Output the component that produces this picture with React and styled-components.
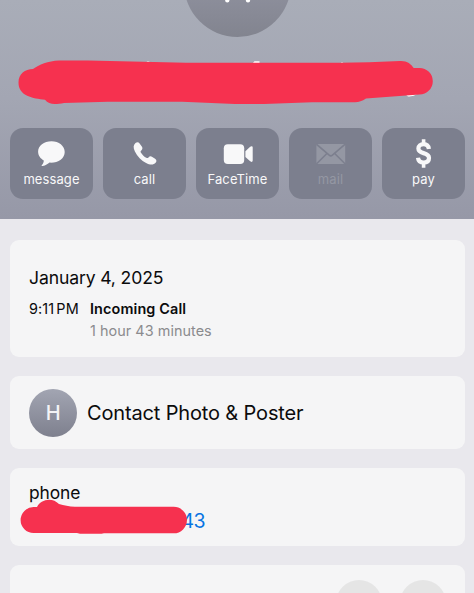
import React from "react";
import styled, { createGlobalStyle } from "styled-components";

const GlobalStyle = createGlobalStyle`
  * { box-sizing: border-box; }
  html, body { margin: 0; overflow: hidden; background: #e9e8ed; }
  body { font-family: Inter, "Liberation Sans", sans-serif; color: #0b0b0c; }
`;

const Screen = styled.main`
  width: 474px;
  height: 593px;
  overflow: hidden;
  display: flex;
  flex-direction: column;
  background: #e9e8ed;
`;

const Header = styled.header`
  position: relative;
  flex: none;
  height: 219px;
  padding: 128px 9px 0 10px;
  background: linear-gradient(#a9adb8 0%, #a3a6b3 45%, #9698a7 100%);
`;

const HeaderArt = styled.svg`
  position: absolute;
  inset: 0;
  display: block;
`;

const Actions = styled.nav`
  display: grid;
  grid-template-columns: repeat(5, 83px);
  gap: 10px;
`;

const Action = styled.button`
  height: 70.5px;
  padding: 11px 0 0;
  border: 0;
  border-radius: 13px;
  background: #7c7f8e;
  color: ${(p) => (p.disabled ? "#9497a3" : "#f8f8f9")};
  display: flex;
  flex-direction: column;
  align-items: center;
  font: 400 13px/16px Inter, "Liberation Sans", sans-serif;
  letter-spacing: 0.1px;

  svg { display: block; margin-bottom: 2px; }
`;

const Cards = styled.div`
  display: flex;
  flex-direction: column;
  gap: 19.4px;
  padding: 21px 9px 0 10px;
`;

const Card = styled.section`
  flex: none;
  height: ${(p) => p.$height}px;
  border-radius: 9px;
  background: #f5f5f6;
`;

const CallCard = styled(Card)`
  padding: 27px 19px 0;
`;

const DateTitle = styled.div`
  font-size: 17.6px;
  line-height: 22px;
  letter-spacing: -0.14px;
`;

const CallRow = styled.div`
  display: grid;
  grid-template-columns: 61px 1fr;
  margin-top: 10px;
  font-size: 14.4px;
  line-height: 20px;
`;

const Time = styled.span`
  letter-spacing: 0.15px;
  word-spacing: -2.2px;
`;

const CallKind = styled.div`
  font-weight: 600;
  letter-spacing: 0.13px;
`;

const Duration = styled.div`
  margin-top: 2px;
  color: #8b8b8e;
  letter-spacing: 0.05px;
`;

const PosterCard = styled(Card)`
  display: flex;
  align-items: center;
  gap: 10px;
  padding-left: 19px;
  font-size: 20px;
  letter-spacing: -0.15px;
`;

const Avatar = styled.div`
  width: 48px;
  height: 48px;
  border-radius: 50%;
  display: flex;
  align-items: center;
  justify-content: center;
  background: linear-gradient(#a2a5b2, #7e808e);
  color: #f4f4f6;
  font-size: 20px;
  font-weight: 500;
`;

const PhoneCard = styled(Card)`
  position: relative;
  padding: 14px 19px 0;
`;

const PhoneLabel = styled.div`
  font-size: 17.4px;
  line-height: 22px;
  letter-spacing: -0.1px;
`;

const Number = styled.div`
  margin: 5px 0 0 152.5px;
  color: #0874e3;
  font-size: 19.5px;
  line-height: 25px;
  letter-spacing: -0.6px;
`;

const Scribble = styled.svg`
  position: absolute;
  left: 9px;
  top: 30px;
`;

const NextCard = styled(Card)`
  display: flex;
  justify-content: flex-end;
  gap: 18px;
  padding: 14.5px 19px 0 0;
`;

const RoundButton = styled.span`
  width: 46px;
  height: 46px;
  border-radius: 50%;
  background: #e5e5e5;
`;

const MessageIcon = () => (
  <svg width="30" height="30" viewBox="0 0 30 30" fill="currentColor">
    <path d="M14.5 2.2C6.9 2.2 1.1 6.6 1.1 12.6C1.1 16.7 3.5 19.8 6.8 21.4C6.8 23.2 6 24.7 4.8 26.1C4.3 26.7 4.8 27.2 5.7 27.1C8.6 26.6 10.9 25 12.6 23.6C21 24.1 27.7 19.5 27.7 12.9C27.7 6.8 21.9 2.2 14.5 2.2Z" />
  </svg>
);

const PhoneIcon = () => (
  <svg width="30" height="30" viewBox="0 0 30 30" fill="currentColor">
    <path transform="translate(-1.2 -.8)" d="M6.7 4.8C8.2 3.5 9.7 3.7 10.8 5.2L13 8.4C14 9.9 13.8 11 12.5 12.2C11.6 13 11.6 13.5 12.2 14.5C13.6 16.7 15.5 18.5 17.5 19.6C18.5 20.1 19 20 19.7 19.2C20.9 17.8 22 17.7 23.5 18.7L26.3 20.6C28 21.8 28 23.1 26.8 24.6C24.8 27 21.2 26.9 17.3 24.8C12.7 22.3 8.4 17.9 6.1 13.2C4.3 9.6 4.4 6.8 6.7 4.8Z" />
  </svg>
);

const VideoIcon = () => (
  <svg width="30" height="30" viewBox="0 0 30 30" fill="currentColor">
    <rect x=".8" y="5.3" width="20.4" height="19.6" rx="4" />
    <path d="M22.4 12.3L26.9 7.9C28.2 6.8 29.7 7 29.7 8.3V21.6C29.7 23.1 28.1 23.3 26.9 22.1L22.4 17.9Z" />
  </svg>
);

const MailIcon = () => (
  <svg width="30" height="30" viewBox="0 0 30 30" fill="none">
    <rect x=".4" y="5" width="28.8" height="20" rx="1" fill="currentColor" />
    <path d="M.4 5.2L13.2 16.2Q14.8 17.5 16.4 16.2L29.2 5.2M.4 25L10.9 14.5M29.2 25L18.7 14.5" stroke="#7c7f8e" strokeWidth="1.6" />
  </svg>
);

const DollarIcon = () => (
  <svg width="30" height="30" viewBox="0 0 30 30" fill="none" stroke="currentColor">
    <path d="M14.6 .3V5M14.6 23.5V28.7" strokeWidth="3.6" />
    <path d="M19.9 10C19.5 6.8 17.6 5.2 14.6 5.2C11.5 5.2 9.4 7 9.4 9.6C9.4 12.2 11.2 13.2 14.5 14.1C18.2 15.1 20 16.3 20 19C20 21.9 17.9 23.5 14.7 23.5C11.4 23.5 9.3 21.9 9 18.7" strokeWidth="4.2" />
  </svg>
);

const actions = [
  { label: "message", Icon: MessageIcon },
  { label: "call", Icon: PhoneIcon },
  { label: "FaceTime", Icon: VideoIcon },
  { label: "mail", Icon: MailIcon, disabled: true },
  { label: "pay", Icon: DollarIcon },
];

export default function App() {
  return (
    <Screen>
      <GlobalStyle />
      <Header>
        <HeaderArt width="474" height="128" viewBox="0 0 474 128">
          <defs>
            <linearGradient id="avatar" x1="0" y1="0" x2="0" y2="1">
              <stop offset=".4" stopColor="#9294a2" />
              <stop offset="1" stopColor="#82848f" />
            </linearGradient>
          </defs>
          <circle cx="237.5" cy="-16.5" r="53.5" fill="url(#avatar)" />
          <path d="M227.3-8V.2M248-8V.2" stroke="#fff" strokeWidth="4.4" strokeLinecap="round" />
          <path d="M146 63L147 61.5H149L151 63ZM252 64L254.5 61.3H259.5V64ZM340 64L342 62.1L344 64ZM405 94L408 96.4Q414 96.8 417 94Z" fill="#fff" />
          <path d="M33 69C39 64.5 48 60.8 59 60.4L88 60.4L186 62.8H340L369 62.3L400 61C407 60.6 411 64 413.7 68L419.5 67.9A13.3 13.3 0 0 1 419.5 94.5L366 98.6C362 101.3 359 102.2 355 102.2H312L264 104H235L182 101.8H108L64 103C56 104.3 49 105.3 45 99.8C33 98.3 18.5 96.3 18.5 82.5C18.5 74 25 69 33 69Z" fill="#f6314f" />
        </HeaderArt>
        <Actions>
          {actions.map(({ label, Icon, disabled }) => (
            <Action key={label} disabled={disabled}>
              <Icon />
              {label}
            </Action>
          ))}
        </Actions>
      </Header>
      <Cards>
        <CallCard $height={117}>
          <DateTitle>January 4, 2025</DateTitle>
          <CallRow>
            <Time>9:11 PM</Time>
            <div>
              <CallKind>Incoming Call</CallKind>
              <Duration>1 hour 43 minutes</Duration>
            </div>
          </CallRow>
        </CallCard>
        <PosterCard $height={72.5}>
          <Avatar>H</Avatar>
          Contact Photo &amp; Poster
        </PosterCard>
        <PhoneCard $height={77.5}>
          <PhoneLabel>phone</PhoneLabel>
          <Number>43</Number>
          <Scribble width="170" height="48" viewBox="0 0 170 48">
            <path transform="translate(1 -.2)" d="M13.6 9.3L17 9.2C19 5 24 2 29 2C33 2 36 3.5 39 6.3C44 7.5 49 9 55 9H153.7A13.2 13.2 0 0 1 153.7 35.5H84Q82 36 78 36H60L57 35.3H13.6A13 13 0 0 1 13.6 9.3Z" fill="#f6314f" />
          </Scribble>
        </PhoneCard>
        <NextCard $height={80}>
          <RoundButton />
          <RoundButton />
        </NextCard>
      </Cards>
    </Screen>
  );
}
